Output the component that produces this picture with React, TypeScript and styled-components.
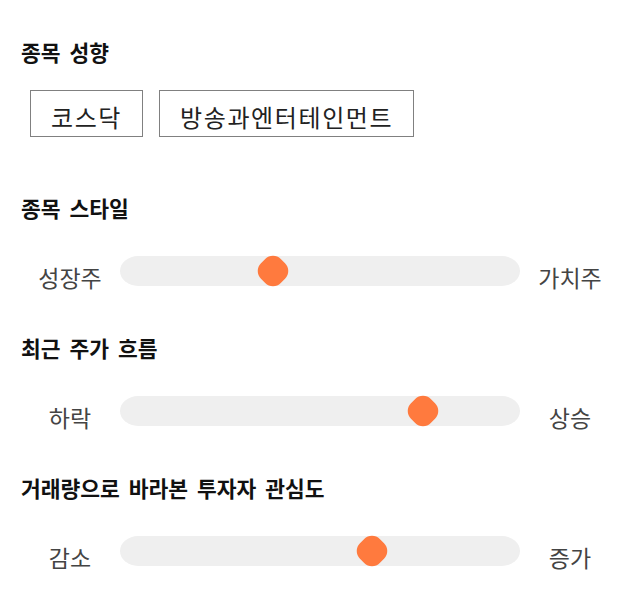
import React from "react";
import styled, { createGlobalStyle } from "styled-components";

const GlobalStyle = createGlobalStyle`
  body {
    margin: 0;
    background: #ffffff;
    font-family: "Noto Sans CJK KR", "Noto Sans", sans-serif;
  }
`;

const Page = styled.div`
  display: flex;
  flex-direction: column;
  width: 640px;
  padding: 37px 20px 30px 20px;
  box-sizing: border-box;
`;

const Section = styled.section<{ gapAfter: number }>`
  display: flex;
  flex-direction: column;
  margin-bottom: ${(props) => props.gapAfter}px;
`;

const Title = styled.h2`
  margin: 0 0 0 1px;
  height: 30px;
  line-height: 30px;
  font-size: 21.5px;
  font-weight: 700;
  color: #111111;
  word-spacing: 4px;
`;

const ChipRow = styled.div`
  display: flex;
  gap: 16px;
  margin-top: 23px;
  margin-left: 10px;
`;

const Chip = styled.div`
  height: 47px;
  box-sizing: border-box;
  padding: 6px 20px 0 20px;
  border: 1px solid #808080;
  display: flex;
  align-items: center;
  font-size: 24px;
  letter-spacing: 1.6px;
  color: #222222;
`;

const SliderRow = styled.div`
  display: grid;
  grid-template-columns: 100px 400px 100px;
  grid-template-rows: 30px;
  align-items: center;
  margin-top: 33px;
`;

const SideLabel = styled.span`
  text-align: center;
  font-size: 23px;
  line-height: 30px;
  padding-top: 11px;
  color: #444444;
`;

const Track = styled.div`
  position: relative;
  height: 30px;
  background: #efefef;
  border-radius: 18px / 15px;
`;

const Thumb = styled.div`
  position: absolute;
  top: 1px;
  width: 28px;
  height: 28px;
  margin-left: -14px;
  background: #ff7a3e;
  border-radius: 11px;
  transform: rotate(45deg);
`;

interface SliderProps {
  title: string;
  left: string;
  right: string;
  value: number;
  gapAfter: number;
}

const StyleSlider = ({ title, left, right, value, gapAfter }: SliderProps) => (
  <Section gapAfter={gapAfter}>
    <Title>{title}</Title>
    <SliderRow>
      <SideLabel>{left}</SideLabel>
      <Track>
        <Thumb style={{ left: `${value * 100}%` }} />
      </Track>
      <SideLabel>{right}</SideLabel>
    </SliderRow>
  </Section>
);

const sliders: SliderProps[] = [
  { title: "종목 스타일", left: "성장주", right: "가치주", value: 0.383, gapAfter: 47 },
  { title: "최근 주가 흐름", left: "하락", right: "상승", value: 0.758, gapAfter: 47 },
  {
    title: "거래량으로 바라본 투자자 관심도",
    left: "감소",
    right: "증가",
    value: 0.63,
    gapAfter: 0,
  },
];

const App = () => {
  return (
    <>
      <GlobalStyle />
      <Page>
        <Section gapAfter={56}>
          <Title>종목 성향</Title>
          <ChipRow>
            <Chip>코스닥</Chip>
            <Chip>방송과엔터테인먼트</Chip>
          </ChipRow>
        </Section>
        {sliders.map((s) => (
          <StyleSlider key={s.title} {...s} />
        ))}
      </Page>
    </>
  );
};

export default App;
